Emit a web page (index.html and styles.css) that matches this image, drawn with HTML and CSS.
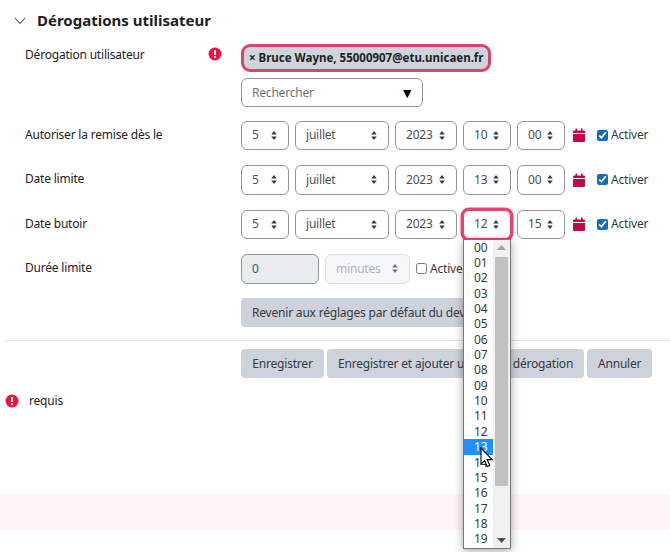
FILE: index.html
```html
<!DOCTYPE html>
<html lang="fr">
<head>
<meta charset="utf-8">
<title>Dérogations utilisateur</title>
<link rel="stylesheet" href="styles.css">
</head>
<body>
<section class="panel">
  <h3 class="title">
    <svg class="chev" width="12" height="8" viewBox="0 0 12 8"><path d="M1 1l5 5.5L11 1" fill="none" stroke="#495057" stroke-width="1.1"/></svg>
    Dérogations utilisateur
  </h3>

  <div class="row row-user">
    <div class="label"><span>Dérogation utilisateur</span>
      <svg class="req req-form" width="14" height="14" viewBox="0 0 14 14"><circle cx="7" cy="7" r="6.5" fill="#f5103c"/><rect x="6" y="3" width="2" height="5" rx=".6" fill="#fff"/><rect x="6" y="9" width="2" height="2" rx=".6" fill="#fff"/></svg>
    </div>
    <div class="stack">
      <div class="chip"><span class="chip-x">×</span> Bruce Wayne, 55000907@etu.unicaen.fr</div>
      <div class="search"><span class="search-text">Rechercher</span><span class="down">▼</span></div>
    </div>
  </div>

  <div class="row row-date">
    <div class="label">Autoriser la remise dès le</div>
    <div class="controls">
      <select class="sel s-day"><option>5</option></select>
      <select class="sel s-month"><option>juillet</option></select>
      <select class="sel s-year"><option>2023</option></select>
      <select class="sel s-day"><option>10</option></select>
      <select class="sel s-day"><option>00</option></select>
      <svg class="cal" width="12" height="14" viewBox="0 0 12 14"><path d="M0 3.5a1 1 0 0 1 1-1h10a1 1 0 0 1 1 1V5H0zM0 6h12v7a1 1 0 0 1-1 1H1a1 1 0 0 1-1-1z" fill="#bf0a45"/><rect x="2.5" y="0.5" width="1.6" height="3" fill="#bf0a45"/><rect x="8" y="0.5" width="1.6" height="3" fill="#bf0a45"/></svg>
      <label class="check"><input type="checkbox" checked>Activer</label>
    </div>
  </div>

  <div class="row row-date">
    <div class="label">Date limite</div>
    <div class="controls">
      <select class="sel s-day"><option>5</option></select>
      <select class="sel s-month"><option>juillet</option></select>
      <select class="sel s-year"><option>2023</option></select>
      <select class="sel s-day"><option>13</option></select>
      <select class="sel s-day"><option>00</option></select>
      <svg class="cal" width="12" height="14" viewBox="0 0 12 14"><path d="M0 3.5a1 1 0 0 1 1-1h10a1 1 0 0 1 1 1V5H0zM0 6h12v7a1 1 0 0 1-1 1H1a1 1 0 0 1-1-1z" fill="#bf0a45"/><rect x="2.5" y="0.5" width="1.6" height="3" fill="#bf0a45"/><rect x="8" y="0.5" width="1.6" height="3" fill="#bf0a45"/></svg>
      <label class="check"><input type="checkbox" checked>Activer</label>
    </div>
  </div>

  <div class="row row-date">
    <div class="label">Date butoir</div>
    <div class="controls">
      <select class="sel s-day"><option>5</option></select>
      <select class="sel s-month"><option>juillet</option></select>
      <select class="sel s-year"><option>2023</option></select>
      <div class="open-wrap">
        <select class="sel s-day focus"><option>12</option></select>
        <div class="dropdown">
          <ul class="opts">
            <li>00</li><li>01</li><li>02</li><li>03</li><li>04</li><li>05</li><li>06</li><li>07</li><li>08</li><li>09</li><li>10</li><li>11</li><li>12</li><li class="hot">13</li><li>14</li><li>15</li><li>16</li><li>17</li><li>18</li><li>19</li>
          </ul>
          <div class="sbar">
            <svg class="sb-up" width="9" height="5" viewBox="0 0 9 5"><path d="M4.5 0L9 5H0z" fill="#a3a3a3"/></svg>
            <div class="thumb"></div>
            <svg class="sb-down" width="9" height="5" viewBox="0 0 9 5"><path d="M4.5 5L9 0H0z" fill="#505050"/></svg>
          </div>
          <svg class="cursor" width="14" height="21" viewBox="0 0 14 21"><path d="M1 1v16l3.6-3.4 2.6 6 2.6-1.1-2.6-5.9h5z" fill="#fff" stroke="#000" stroke-width="1.1"/></svg>
        </div>
      </div>
      <select class="sel s-day"><option>15</option></select>
      <svg class="cal" width="12" height="14" viewBox="0 0 12 14"><path d="M0 3.5a1 1 0 0 1 1-1h10a1 1 0 0 1 1 1V5H0zM0 6h12v7a1 1 0 0 1-1 1H1a1 1 0 0 1-1-1z" fill="#bf0a45"/><rect x="2.5" y="0.5" width="1.6" height="3" fill="#bf0a45"/><rect x="8" y="0.5" width="1.6" height="3" fill="#bf0a45"/></svg>
      <label class="check"><input type="checkbox" checked>Activer</label>
    </div>
  </div>

  <div class="row row-date row-last">
    <div class="label">Durée limite</div>
    <div class="controls">
      <input class="num" type="text" value="0" disabled>
      <select class="sel s-unit" disabled><option>minutes</option></select>
      <label class="check check-off"><input type="checkbox">Activer</label>
    </div>
  </div>

  <div class="row row-btn">
    <div class="label"></div>
    <button class="btn" type="button">Revenir aux réglages par défaut du devoir</button>
  </div>

  <hr class="rule">

  <div class="row row-actions">
    <div class="label"></div>
    <div class="actions">
      <button class="btn btn-save" type="button">Enregistrer</button>
      <button class="btn btn-more" type="button">Enregistrer et ajouter une autre dérogation</button>
      <button class="btn btn-cancel" type="button">Annuler</button>
    </div>
  </div>

  <div class="legend">
    <svg class="req" width="14" height="14" viewBox="0 0 14 14"><circle cx="7" cy="7" r="6.5" fill="#f5103c"/><rect x="6" y="3" width="2" height="5" rx=".6" fill="#fff"/><rect x="6" y="9" width="2" height="2" rx=".6" fill="#fff"/></svg>
    <span>requis</span>
  </div>
</section>
<div class="band"></div>
</body>
</html>
```
FILE: styles.css
```css
* { box-sizing: border-box; }
html, body { margin: 0; padding: 0; }
body {
  width: 670px;
  height: 552px;
  overflow: hidden;
  background: #fff;
  color: #1d2125;
  font-family: "Noto Sans", sans-serif;
  font-size: 12px;
  line-height: 18px;
  letter-spacing: -0.2px;
}
.title {
  margin: 0;
  height: 44px;
  padding: 10px 0 0 14px;
  display: flex;
  align-items: flex-start;
  font-size: 15px;
  line-height: 20px;
  font-weight: 700;
  letter-spacing: 0;
  color: #1d2125;
}
.chev { margin: 7px 11px 0 0; }
.row { display: flex; align-items: flex-start; }
.label {
  width: 241px;
  flex: none;
  padding-left: 25px;
  position: relative;
}
.req-form { position: absolute; left: 208px; top: 3px; }
.row-user { height: 76.5px; }
.row-user .label { padding-top: 2px; }
.row-date { height: 44.5px; }
.row-date .label { padding-top: 5px; }
.row-last { height: 44px; }
.row-btn { height: 42px; }
.stack { display: flex; flex-direction: column; align-items: flex-start; gap: 6px; }
.chip {
  width: 250px;
  height: 28px;
  padding-left: 5px;
  background: #ced4da;
  border: 3px solid #d9436d;
  border-radius: 9px;
  font-size: 11.5px;
  line-height: 22px;
  font-weight: 700;
  letter-spacing: 0;
  white-space: nowrap;
  color: #1d2125;
}
.search {
  width: 182px;
  height: 29px;
  padding: 0 8px 0 10px;
  display: flex;
  justify-content: space-between;
  align-items: center;
  border: 1px solid #8f959e;
  border-radius: 6px;
  color: #6a737b;
}
.search-text { padding-top: 1px; }
.down { color: #000; font-size: 14px; letter-spacing: 0; }
.controls { display: flex; align-items: center; gap: 6px; height: 29.5px; }
.sel {
  appearance: none;
  -webkit-appearance: none;
  height: 29.5px;
  margin: 0;
  padding: 0 0 0 10px;
  border: 1px solid #8f959e;
  border-radius: 6px;
  color: #495057;
  font: inherit;
  letter-spacing: inherit;
  background: #fff url("data:image/svg+xml,%3Csvg xmlns='http://www.w3.org/2000/svg' width='6' height='9'%3E%3Cpath d='M3 0l2.8 3.4H.2zM3 9L.2 5.6h5.6z' fill='%23343a40'/%3E%3C/svg%3E") no-repeat right 11px center;
}
.s-day { width: 48px; }
.s-month { width: 94px; }
.s-year { width: 62px; }
.s-unit {
  width: 85px;
  background-color: #f1f3f5;
  border-color: #ced4da;
  color: #8f959e;
}
.focus { box-shadow: 0 0 0 2.5px #e5446f; border-color: #e5446f; }
.open-wrap { position: relative; height: 29.5px; }
.num {
  width: 78px;
  height: 29.5px;
  padding: 0 10px;
  border: 1px solid #8f959e;
  border-radius: 6px;
  background: #e9ecef;
  color: #495057;
  font: inherit;
}
.cal { margin: 0 6px 0 2px; }
.check { display: flex; align-items: center; gap: 3px; color: #343a40; }
.check input { width: 11px; height: 11px; margin: 0; accent-color: #0f6cbf; }
.btn {
  height: 29px;
  padding: 0 11px;
  border: 0;
  border-radius: 4px;
  background: #ced3db;
  color: #343a40;
  font: inherit;
  letter-spacing: inherit;
  white-space: nowrap;
}
.row-btn .btn { width: 250px; text-align: left; }
.btn-save { width: 83px; }
.btn-more { width: 257px; }
.btn-cancel { width: 65px; }
.rule { margin: 0 0 8px 4px; border: 0; border-top: 1px solid #dee2e6; }
.actions { display: flex; gap: 3px; }
.row-actions { height: 29px; }
.legend { display: flex; align-items: center; gap: 10px; margin-top: 14px; padding-left: 5px; }
.band {
  position: absolute;
  left: 0;
  right: 0;
  top: 494px;
  height: 36px;
  background: #fff3f6;
}
.dropdown {
  position: absolute;
  z-index: 5;
  left: 0;
  top: 29px;
  width: 48px;
  height: 310px;
  background: #fff;
  border: 1px solid #767676;
  box-shadow: 0 2px 9px rgba(0,0,0,.35);
  display: flex;
}
.opts {
  list-style: none;
  margin: 0;
  padding: 0;
  width: 29px;
  color: #343a40;
  font-size: 12px;
}
.opts li {
  height: 15.37px;
  line-height: 15.37px;
  padding-left: 10px;
}
.opts .hot { background: #1e90ff; color: #fff; }
.sbar {
  width: 17px;
  background: #f0f0f0;
  position: relative;
}
.thumb {
  position: absolute;
  left: 2px;
  top: 17px;
  width: 13px;
  height: 229px;
  background: #c1c1c1;
}
.sb-up { position: absolute; left: 4px; top: 5px; }
.sb-down { position: absolute; left: 4px; bottom: 5px; }
.cursor { position: absolute; left: 16px; top: 207px; z-index: 6; }
```
